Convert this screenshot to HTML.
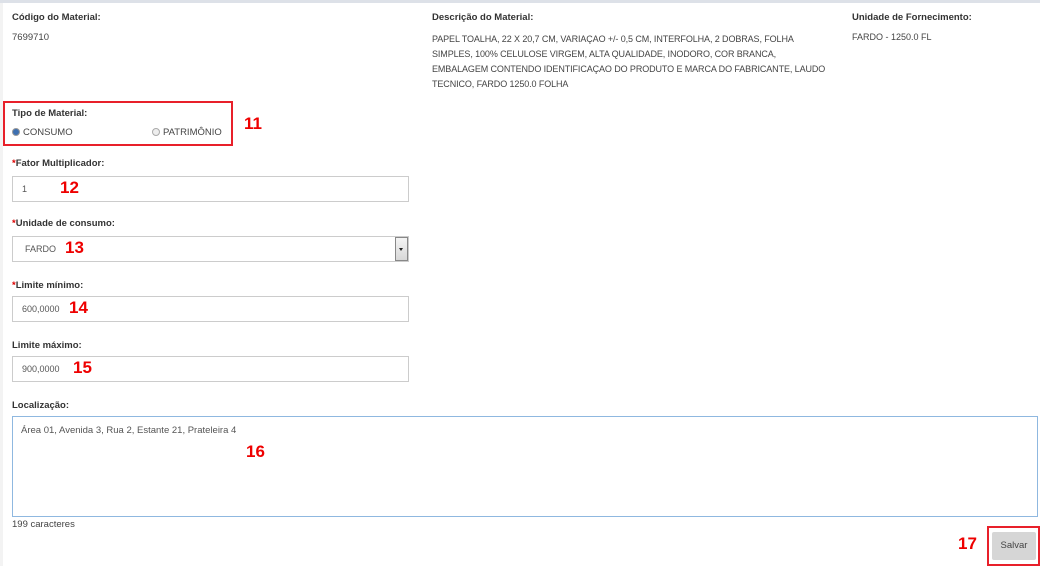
<!DOCTYPE html>
<html><head><meta charset="utf-8"><style>
*{margin:0;padding:0;box-sizing:border-box}
body{width:1040px;height:566px;background:#fff;font-family:"Liberation Sans",sans-serif;position:relative;overflow:hidden;color:#333}
.a{position:absolute;white-space:nowrap}
.l{font-size:9.5px;font-weight:bold;color:#333}
.v{font-size:9.5px;color:#444}
.req{color:#d00}
.inp{position:absolute;left:12px;width:397px;height:26px;border:1px solid #ccc;background:#fff}
.inp span{position:absolute;left:9px;top:7px;font-size:9px;color:#555}
.n{position:absolute;color:#e00;font-weight:bold;font-size:17px}
</style></head><body>
<div class="a" style="left:0;top:0;width:1040px;height:3px;background:#dde1e8"></div>
<div class="a" style="left:0;top:3px;width:3px;height:563px;background:#f3f3f3"></div>
<div class="a l" style="left:12px;top:12px">Código do Material:</div>
<div class="a v" style="left:12px;top:32px">7699710</div>
<div class="a l" style="left:432px;top:12px">Descrição do Material:</div>
<div class="a v" style="left:432px;top:32px;line-height:15px;font-size:9px;letter-spacing:-0.1px">PAPEL TOALHA, 22 X 20,7 CM, VARIAÇAO +/- 0,5 CM, INTERFOLHA, 2 DOBRAS, FOLHA<br>SIMPLES, 100% CELULOSE VIRGEM, ALTA QUALIDADE, INODORO, COR BRANCA,<br>EMBALAGEM CONTENDO IDENTIFICAÇAO DO PRODUTO E MARCA DO FABRICANTE, LAUDO<br>TECNICO, FARDO 1250.0 FOLHA</div>
<div class="a l" style="left:852px;top:12px">Unidade de Fornecimento:</div>
<div class="a v" style="left:852px;top:32px;font-size:9px">FARDO - 1250.0 FL</div>

<div class="a" style="left:3px;top:101px;width:230px;height:45px;border:2px solid #e8202a"></div>
<div class="a l" style="left:12px;top:108px">Tipo de Material:</div>
<div class="a" style="left:12px;top:128px;width:8px;height:8px;border-radius:50%;background:#3d6fb0;border:1px solid #999"></div>
<div class="a v" style="left:23px;top:127px">CONSUMO</div>
<div class="a" style="left:152px;top:128px;width:8px;height:8px;border-radius:50%;background:#eee;border:1px solid #aaa"></div>
<div class="a v" style="left:163px;top:127px">PATRIMÔNIO</div>
<div class="n" style="left:244px;top:114px">11</div>

<div class="a l" style="left:12px;top:158px"><span class="req">*</span>Fator Multiplicador:</div>
<div class="inp" style="top:176px"><span>1</span></div>
<div class="n" style="left:60px;top:178px">12</div>

<div class="a l" style="left:12px;top:218px"><span class="req">*</span>Unidade de consumo:</div>
<div class="inp" style="top:236px"><span style="left:12px">FARDO</span></div>
<div class="a" style="left:395px;top:237px;width:13px;height:24px;background:linear-gradient(#f4f4f4,#d8d8d8);border:1px solid #888"></div>
<div class="a" style="left:399px;top:248px;border-left:2.5px solid transparent;border-right:2.5px solid transparent;border-top:3px solid #222"></div>
<div class="n" style="left:65px;top:238px">13</div>

<div class="a l" style="left:12px;top:280px"><span class="req">*</span>Limite mínimo:</div>
<div class="inp" style="top:296px"><span>600,0000</span></div>
<div class="n" style="left:69px;top:298px">14</div>

<div class="a l" style="left:12px;top:340px">Limite máximo:</div>
<div class="inp" style="top:356px"><span>900,0000</span></div>
<div class="n" style="left:73px;top:358px">15</div>

<div class="a l" style="left:12px;top:400px">Localização:</div>
<div class="a" style="left:12px;top:416px;width:1026px;height:101px;border:1px solid #8fb8e0"></div>
<div class="a v" style="left:21px;top:425px;color:#555">Área 01, Avenida 3, Rua 2, Estante 21, Prateleira 4</div>
<div class="n" style="left:246px;top:442px">16</div>
<div class="a v" style="left:12px;top:519px">199 caracteres</div>

<div class="n" style="left:958px;top:534px">17</div>
<div class="a" style="left:987px;top:526px;width:53px;height:40px;border:2px solid #e8202a"></div>
<div class="a" style="left:992px;top:532px;width:44px;height:28px;background:#d6d6d6;border-radius:2px;font-size:9.5px;color:#444;text-align:center;line-height:28px">Salvar</div>
</body></html>
